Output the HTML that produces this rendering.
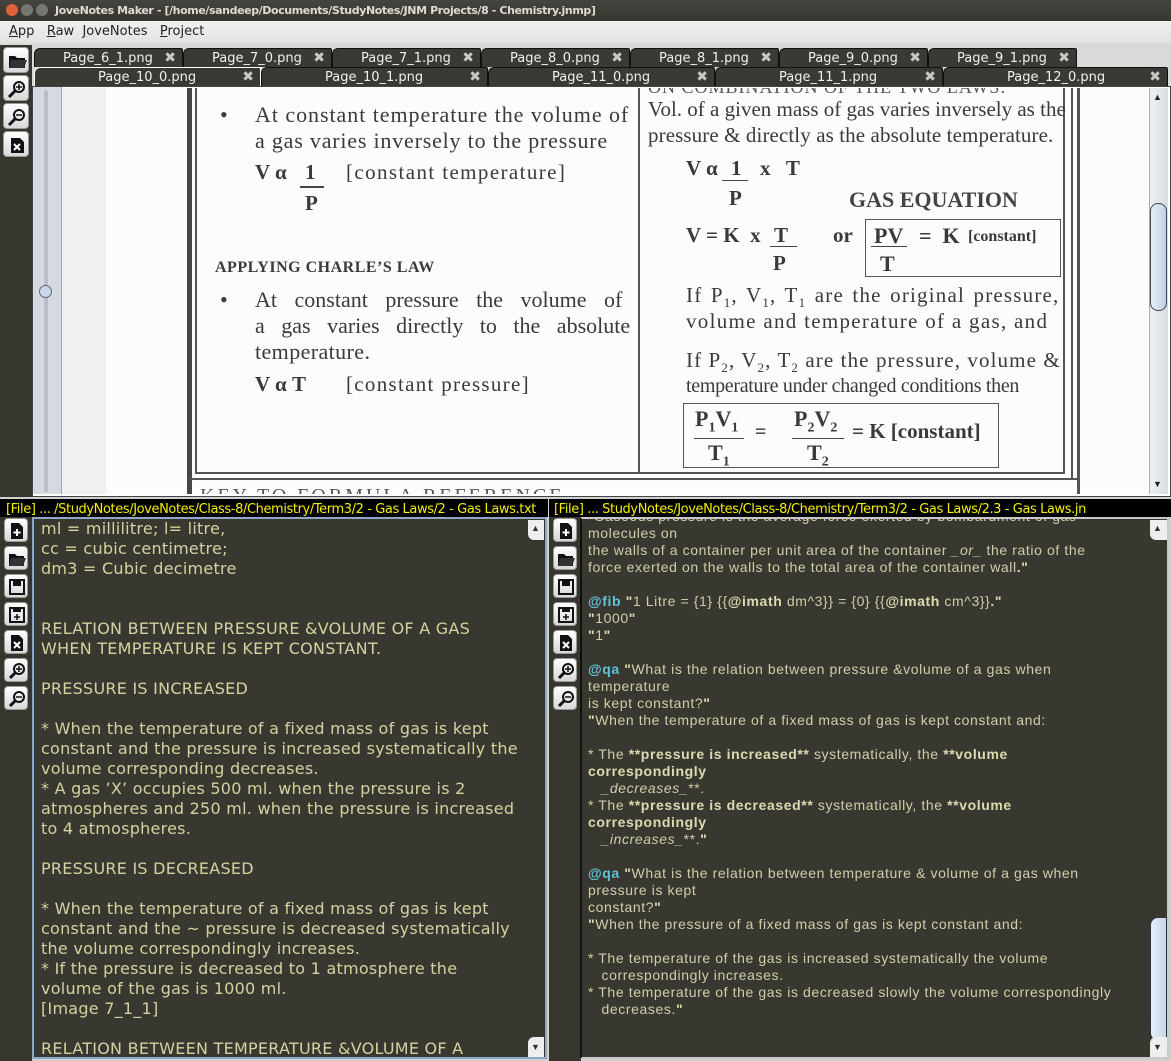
<!DOCTYPE html>
<html><head><meta charset="utf-8"><style>
*{margin:0;padding:0;box-sizing:border-box}
body{width:1171px;height:1061px;overflow:hidden;background:#d6d6d6;position:relative;font-family:"Liberation Sans",sans-serif}
.a{position:absolute}
.t{position:absolute;white-space:nowrap;line-height:1}
#title{left:0;top:0;width:1171px;height:21px;background:linear-gradient(#45443f,#36352f);color:#dfdbd2;font:bold 11px "DejaVu Sans",sans-serif}
#menu{left:0;top:21px;width:1171px;height:22px;background:linear-gradient(#f2f1f0,#e3e2e0);font:13px "DejaVu Sans",sans-serif;color:#222}
.tab{position:absolute;height:19px;background:#3a3933;border:1px solid #111;border-bottom:none;border-radius:6px 2px 0 0;color:#f0f0f0;font:13px "DejaVu Sans",sans-serif;}
.tab span{position:absolute;top:2px}
.tab b{position:absolute;right:6px;top:1px;color:#c8c8c8;font:bold 14px "DejaVu Sans",sans-serif}
.btn{position:absolute;width:26px;height:26px;border-radius:4px;background:linear-gradient(#ffffff,#d8d8d8);border:1px solid #999}
.btn svg{position:absolute;left:3px;top:3px}
.serif{font-family:"Liberation Serif",serif;color:#3a3a3a}
.ed1{position:absolute;left:41px;top:519px;font:16px "DejaVu Sans",sans-serif;color:#d4d2a0;line-height:20px;white-space:pre;letter-spacing:0.25px}
.ed2{position:absolute;left:588px;top:508px;font:14px "Liberation Sans",sans-serif;color:#d0ceaa;line-height:17px;white-space:pre;letter-spacing:0.6px}
.c{color:#5ec4d6;font-weight:bold}
.bd{font-weight:bold;color:#dcdab0}
.sb{position:absolute;background:linear-gradient(90deg,#eef0f3,#d8dce2);border-left:1px solid #aaa}
</style></head><body>
<div id="title" class="a">
 <div class="a" style="left:6px;top:4px;width:12px;height:12px;border-radius:6px;background:#e0613a"></div>
 <div class="a" style="left:21px;top:4px;width:12px;height:12px;border-radius:6px;background:#77766f"></div>
 <div class="a" style="left:36px;top:4px;width:12px;height:12px;border-radius:6px;background:#77766f"></div>
 <div class="t" style="left:55px;top:5px;letter-spacing:-0.4px">JoveNotes Maker - [/home/sandeep/Documents/StudyNotes/JNM Projects/8 - Chemistry.jnmp]</div>
</div>
<div id="menu" class="a">
 <div class="t" style="left:9px;top:4px"><u>A</u>pp&nbsp;&nbsp; <u>R</u>aw&nbsp; <u>J</u>oveNotes&nbsp;&nbsp; <u>P</u>roject</div>
</div>
<div class="a" style="left:0;top:43px;width:1171px;height:454px;background:#d9d9d9"></div>
<div class="a" style="left:0;top:45px;width:32px;height:452px;background:#36352e"></div>
<div class="btn" style="left:3px;top:47px"><svg width="20" height="20"><path d="M2 5h6l2 2h8v10H2z" fill="#111"/><path d="M4 9h16l-3 8H2z" fill="#333"/></svg></div>
<div class="btn" style="left:3px;top:75px"><svg width="20" height="20"><circle cx="12" cy="8" r="5" fill="none" stroke="#111" stroke-width="2"/><path d="M9 8h6M12 5v6" stroke="#111" stroke-width="1.5"/><path d="M8 12l-6 6" stroke="#111" stroke-width="3"/></svg></div>
<div class="btn" style="left:3px;top:103px"><svg width="20" height="20"><circle cx="12" cy="8" r="5" fill="none" stroke="#111" stroke-width="2"/><path d="M9 8h6" stroke="#111" stroke-width="1.5"/><path d="M8 12l-6 6" stroke="#111" stroke-width="3"/></svg></div>
<div class="btn" style="left:3px;top:131px"><svg width="20" height="20"><path d="M4 3h9l4 4v11H4z" fill="#111"/><path d="M7 9l6 6M13 9l-6 6" stroke="#fff" stroke-width="2"/></svg></div>

<div class="a" style="left:33px;top:47px;width:1138px;height:40px;background:#d9d9d9"></div>
<div class="tab" style="left:34px;top:48px;width:149px"><span style="left:28px">Page_6_1.png</span><b>✖</b></div>
<div class="tab" style="left:183px;top:48px;width:149px"><span style="left:28px">Page_7_0.png</span><b>✖</b></div>
<div class="tab" style="left:332px;top:48px;width:149px"><span style="left:28px">Page_7_1.png</span><b>✖</b></div>
<div class="tab" style="left:481px;top:48px;width:149px"><span style="left:28px">Page_8_0.png</span><b>✖</b></div>
<div class="tab" style="left:630px;top:48px;width:149px"><span style="left:28px">Page_8_1.png</span><b>✖</b></div>
<div class="tab" style="left:779px;top:48px;width:149px"><span style="left:28px">Page_9_0.png</span><b>✖</b></div>
<div class="tab" style="left:928px;top:48px;width:149px"><span style="left:28px">Page_9_1.png</span><b>✖</b></div>
<div class="tab" style="left:34px;top:67px;width:227px;border-color:#fff"><span style="left:63px">Page_10_0.png</span><b>✖</b></div>
<div class="tab" style="left:261px;top:67px;width:227px"><span style="left:63px">Page_10_1.png</span><b>✖</b></div>
<div class="tab" style="left:488px;top:67px;width:227px"><span style="left:63px">Page_11_0.png</span><b>✖</b></div>
<div class="tab" style="left:715px;top:67px;width:228px"><span style="left:63px">Page_11_1.png</span><b>✖</b></div>
<div class="tab" style="left:943px;top:67px;width:225px"><span style="left:63px">Page_12_0.png</span><b>✖</b></div>

<div class="a" style="left:32px;top:86px;width:1139px;height:411px;background:#fff;border:1px solid #444"></div>
<div class="a" style="left:33px;top:87px;width:29px;height:407px;background:#d5d9e0;border-right:1px solid #9aa"></div>
<div class="a" style="left:44px;top:90px;width:4px;height:402px;background:#b8bec8;border-radius:2px"></div>
<div class="a" style="left:39px;top:285px;width:13px;height:13px;border-radius:7px;background:#c7d8ea;border:1px solid #667"></div>
<div class="a" style="left:62px;top:88px;width:44px;height:406px;background:#eef0f2"></div>
<div class="a" style="left:106px;top:88px;width:1042px;height:406px;background:#fcfcfa;overflow:hidden">
 <div class="t serif" style="left:542px;top:-10px;font-size:18px;color:#555;letter-spacing:1px">ON COMBINATION OF THE TWO LAWS:</div>
 <div class="t serif" style="left:94px;top:398px;font-size:20px;color:#555;letter-spacing:3px">KEY TO FORMULA REFERENCE</div>
</div>
<div class="a" style="left:187px;top:88px;width:5px;height:406px;background:#4a4545"></div>
<div class="a" style="left:195px;top:88px;width:2px;height:386px;background:#555"></div>
<div class="a" style="left:195px;top:472px;width:870px;height:2px;background:#555"></div>
<div class="a" style="left:190px;top:478px;width:890px;height:2px;background:#555"></div>
<div class="a" style="left:638px;top:88px;width:2px;height:385px;background:#555"></div>
<div class="a" style="left:1063px;top:88px;width:2px;height:386px;background:#555"></div>
<div class="a" style="left:1071px;top:88px;width:2px;height:392px;background:#555"></div>
<div class="a" style="left:1077px;top:88px;width:3px;height:406px;background:#555"></div>

<div class="t serif" style="left:220px;top:104px;font-size:22px">•</div>
<div class="t serif" style="left:255px;top:104px;font-size:22px;letter-spacing:0.95px">At constant temperature the volume of</div>
<div class="t serif" style="left:255px;top:130px;font-size:22px;letter-spacing:0.8px">a gas varies inversely to the pressure</div>
<div class="t serif" style="left:255px;top:162px;font-size:21px;font-weight:bold">V α</div>
<div class="t serif" style="left:305px;top:162px;font-size:21px;font-weight:bold">1</div>
<div class="a" style="left:300px;top:186px;width:24px;height:2px;background:#444"></div>
<div class="t serif" style="left:305px;top:193px;font-size:21px;font-weight:bold">P</div>
<div class="t serif" style="left:346px;top:162px;font-size:21px;letter-spacing:1.4px">[constant temperature]</div>
<div class="t serif" style="left:215px;top:260px;font-size:16px;font-weight:bold;letter-spacing:0.5px">APPLYING CHARLE’S LAW</div>
<div class="t serif" style="left:220px;top:289px;font-size:22px">•</div>
<div class="t serif" style="left:255px;top:289px;font-size:22px;word-spacing:12px">At constant pressure the volume of</div>
<div class="t serif" style="left:255px;top:315px;font-size:22px;word-spacing:11px">a gas varies directly to the absolute</div>
<div class="t serif" style="left:255px;top:341px;font-size:22px;letter-spacing:0.4px">temperature.</div>
<div class="t serif" style="left:255px;top:374px;font-size:21px;font-weight:bold">V α T</div>
<div class="t serif" style="left:346px;top:374px;font-size:21px;letter-spacing:1.3px">[constant pressure]</div>

<div class="t serif" style="left:648px;top:99px;font-size:21px;letter-spacing:0px">Vol. of a given mass of gas varies inversely as the</div>
<div class="t serif" style="left:648px;top:125px;font-size:21px;letter-spacing:0.1px">pressure &amp; directly as the absolute temperature.</div>
<div class="t serif" style="left:686px;top:158px;font-size:21px;font-weight:bold">V α</div>
<div class="t serif" style="left:731px;top:158px;font-size:21px;font-weight:bold">1</div>
<div class="a" style="left:722px;top:180px;width:26px;height:1px;background:#444"></div>
<div class="t serif" style="left:760px;top:158px;font-size:21px;font-weight:bold">x&nbsp;&nbsp; T</div>
<div class="t serif" style="left:729px;top:188px;font-size:21px;font-weight:bold">P</div>
<div class="t serif" style="left:849px;top:189px;font-size:22px;font-weight:bold;color:#444">GAS EQUATION</div>
<div class="t serif" style="left:686px;top:225px;font-size:21px;font-weight:bold">V = K&nbsp; x</div>
<div class="t serif" style="left:774px;top:225px;font-size:21px;font-weight:bold">T</div>
<div class="a" style="left:770px;top:246px;width:27px;height:1px;background:#444"></div>
<div class="t serif" style="left:773px;top:253px;font-size:21px;font-weight:bold">P</div>
<div class="t serif" style="left:833px;top:225px;font-size:21px;font-weight:bold">or</div>
<div class="a" style="left:865px;top:219px;width:196px;height:58px;border:1px solid #555"></div>
<div class="t serif" style="left:874px;top:225px;font-size:22px;font-weight:bold">PV</div>
<div class="a" style="left:871px;top:246px;width:36px;height:1px;background:#444"></div>
<div class="t serif" style="left:880px;top:253px;font-size:22px;font-weight:bold">T</div>
<div class="t serif" style="left:919px;top:225px;font-size:22px;font-weight:bold">=&nbsp; K</div>
<div class="t serif" style="left:968px;top:229px;font-size:16px;font-weight:bold">[constant]</div>
<div class="t serif" style="left:686px;top:285px;font-size:21px;word-spacing:2px;letter-spacing:1.2px">If P<sub style="font-size:13px">1</sub>, V<sub style="font-size:13px">1</sub>, T<sub style="font-size:13px">1</sub> are the original pressure,</div>
<div class="t serif" style="left:686px;top:311px;font-size:21px;letter-spacing:1.3px">volume and temperature of a gas, and</div>
<div class="t serif" style="left:686px;top:350px;font-size:21px;letter-spacing:1.1px">If P<sub style="font-size:13px">2</sub>, V<sub style="font-size:13px">2</sub>, T<sub style="font-size:13px">2</sub> are the pressure, volume &amp;</div>
<div class="t serif" style="left:686px;top:376px;font-size:20px;letter-spacing:-0.3px">temperature under changed conditions then</div>
<div class="a" style="left:683px;top:403px;width:316px;height:65px;border:1px solid #555"></div>
<div class="t serif" style="left:695px;top:408px;font-size:22px;font-weight:bold">P<sub style="font-size:14px">1</sub>V<sub style="font-size:14px">1</sub></div>
<div class="a" style="left:694px;top:438px;width:50px;height:1px;background:#444"></div>
<div class="t serif" style="left:708px;top:442px;font-size:22px;font-weight:bold">T<sub style="font-size:14px">1</sub></div>
<div class="t serif" style="left:755px;top:422px;font-size:20px;font-weight:bold">=</div>
<div class="t serif" style="left:794px;top:408px;font-size:22px;font-weight:bold">P<sub style="font-size:14px">2</sub>V<sub style="font-size:14px">2</sub></div>
<div class="a" style="left:792px;top:438px;width:52px;height:1px;background:#444"></div>
<div class="t serif" style="left:807px;top:442px;font-size:22px;font-weight:bold">T<sub style="font-size:14px">2</sub></div>
<div class="t serif" style="left:852px;top:421px;font-size:21px;font-weight:bold">= K [constant]</div>

<div class="sb" style="left:1149px;top:88px;width:19px;height:406px"></div>
<div class="t" style="left:1153px;top:93px;font-size:9px;color:#222">▲</div>
<div class="t" style="left:1153px;top:480px;font-size:9px;color:#222">▼</div>
<div class="a" style="left:1150px;top:203px;width:17px;height:108px;border-radius:8px;background:linear-gradient(90deg,#e8f0f8,#bcd0e4);border:1px solid #445"></div>

<div class="a" style="left:0;top:497px;width:1171px;height:564px;background:#d0d0d0"></div>
<div class="a" style="left:0;top:499px;width:548px;height:18px;background:#000"></div>
<div class="t" style="left:6px;top:502px;font:13px 'DejaVu Sans',sans-serif;color:#f4f000;letter-spacing:-0.4px">[File] ... /StudyNotes/JoveNotes/Class-8/Chemistry/Term3/2 - Gas Laws/2 - Gas Laws.txt</div>
<div class="a" style="left:549px;top:499px;width:622px;height:18px;background:#000"></div>
<div class="t" style="left:554px;top:502px;font:13px 'DejaVu Sans',sans-serif;color:#f4f000;letter-spacing:-0.4px">[File] ... StudyNotes/JoveNotes/Class-8/Chemistry/Term3/2 - Gas Laws/2.3 - Gas Laws.jn</div>

<div class="a" style="left:0;top:517px;width:32px;height:544px;background:#36352e"></div>
<div class="a" style="left:32px;top:517px;width:515px;height:542px;background:#393830;border:2px solid #8fa8c8"></div>
<div class="a" style="left:549px;top:517px;width:32px;height:544px;background:#36352e"></div>
<div class="a" style="left:580px;top:517px;width:589px;height:542px;background:#393830;border:2px solid #c8c8c8;border-left-color:#111"></div>

<div class="btn" style="left:4px;top:518px;width:24px;height:24px"><svg width="18" height="18"><path d="M3 1h8l4 4v12H3z" fill="#111"/><path d="M9 7v7M5.5 10.5h7" stroke="#fff" stroke-width="2"/></svg></div>
<div class="btn" style="left:4px;top:546px;width:24px;height:24px"><svg width="18" height="18"><path d="M1 4h6l2 2h7v10H1z" fill="#111"/><path d="M3 8h15l-3 8H1z" fill="#333"/></svg></div>
<div class="btn" style="left:4px;top:574px;width:24px;height:24px"><svg width="18" height="18"><rect x="2" y="2" width="14" height="14" fill="none" stroke="#111" stroke-width="2"/><rect x="5" y="2" width="8" height="6" fill="#111"/></svg></div>
<div class="btn" style="left:4px;top:602px;width:24px;height:24px"><svg width="18" height="18"><rect x="2" y="2" width="14" height="14" fill="none" stroke="#111" stroke-width="2"/><rect x="5" y="2" width="8" height="4" fill="#111"/><path d="M9 8v6M6 11h6" stroke="#111" stroke-width="1.5"/></svg></div>
<div class="btn" style="left:4px;top:630px;width:24px;height:24px"><svg width="18" height="18"><path d="M3 1h8l4 4v12H3z" fill="#111"/><path d="M6 8l6 6M12 8l-6 6" stroke="#fff" stroke-width="2"/></svg></div>
<div class="btn" style="left:4px;top:658px;width:24px;height:24px"><svg width="18" height="18"><circle cx="11" cy="7" r="5" fill="none" stroke="#111" stroke-width="2"/><path d="M8 7h6M11 4v6" stroke="#111" stroke-width="1.5"/><path d="M7 11l-5 5" stroke="#111" stroke-width="3"/></svg></div>
<div class="btn" style="left:4px;top:686px;width:24px;height:24px"><svg width="18" height="18"><circle cx="11" cy="7" r="5" fill="none" stroke="#111" stroke-width="2"/><path d="M8 7h6" stroke="#111" stroke-width="1.5"/><path d="M7 11l-5 5" stroke="#111" stroke-width="3"/></svg></div>

<div class="btn" style="left:553px;top:518px;width:24px;height:24px"><svg width="18" height="18"><path d="M3 1h8l4 4v12H3z" fill="#111"/><path d="M9 7v7M5.5 10.5h7" stroke="#fff" stroke-width="2"/></svg></div>
<div class="btn" style="left:553px;top:546px;width:24px;height:24px"><svg width="18" height="18"><path d="M1 4h6l2 2h7v10H1z" fill="#111"/><path d="M3 8h15l-3 8H1z" fill="#333"/></svg></div>
<div class="btn" style="left:553px;top:574px;width:24px;height:24px"><svg width="18" height="18"><rect x="2" y="2" width="14" height="14" fill="none" stroke="#111" stroke-width="2"/><rect x="5" y="2" width="8" height="6" fill="#111"/></svg></div>
<div class="btn" style="left:553px;top:602px;width:24px;height:24px"><svg width="18" height="18"><rect x="2" y="2" width="14" height="14" fill="none" stroke="#111" stroke-width="2"/><rect x="5" y="2" width="8" height="4" fill="#111"/><path d="M9 8v6M6 11h6" stroke="#111" stroke-width="1.5"/></svg></div>
<div class="btn" style="left:553px;top:630px;width:24px;height:24px"><svg width="18" height="18"><path d="M3 1h8l4 4v12H3z" fill="#111"/><path d="M6 8l6 6M12 8l-6 6" stroke="#fff" stroke-width="2"/></svg></div>
<div class="btn" style="left:553px;top:658px;width:24px;height:24px"><svg width="18" height="18"><circle cx="11" cy="7" r="5" fill="none" stroke="#111" stroke-width="2"/><path d="M8 7h6M11 4v6" stroke="#111" stroke-width="1.5"/><path d="M7 11l-5 5" stroke="#111" stroke-width="3"/></svg></div>
<div class="btn" style="left:553px;top:686px;width:24px;height:24px"><svg width="18" height="18"><circle cx="11" cy="7" r="5" fill="none" stroke="#111" stroke-width="2"/><path d="M8 7h6" stroke="#111" stroke-width="1.5"/><path d="M7 11l-5 5" stroke="#111" stroke-width="3"/></svg></div>

<div class="ed1">ml = millilitre; l= litre,
cc = cubic centimetre;
dm3 = Cubic decimetre


RELATION BETWEEN PRESSURE &amp;VOLUME OF A GAS
WHEN TEMPERATURE IS KEPT CONSTANT.

PRESSURE IS INCREASED

* When the temperature of a fixed mass of gas is kept
constant and the pressure is increased systematically the
volume corresponding decreases.
* A gas ’X’ occupies 500 ml. when the pressure is 2
atmospheres and 250 ml. when the pressure is increased
to 4 atmospheres.

PRESSURE IS DECREASED

* When the temperature of a fixed mass of gas is kept
constant and the ~ pressure is decreased systematically
the volume correspondingly increases.
* If the pressure is decreased to 1 atmosphere the
volume of the gas is 1000 ml.
[Image 7_1_1]

RELATION BETWEEN TEMPERATURE &amp;VOLUME OF A</div>
<div class="a" style="left:528px;top:520px;width:16px;height:537px;background:#393830"></div>
<div class="a" style="left:528px;top:520px;width:16px;height:20px;background:#eee;border-radius:0 0 0 6px"></div>
<div class="t" style="left:531px;top:524px;font-size:9px;color:#333">▲</div>
<div class="a" style="left:528px;top:1037px;width:16px;height:20px;background:#eee;border-radius:6px 0 0 0"></div>
<div class="t" style="left:531px;top:1043px;font-size:9px;color:#333">▼</div>

<div class="a" style="left:582px;top:519px;width:568px;height:538px;overflow:hidden"><div class="ed2" style="left:6px;top:-11px">"Gaseous pressure is the average force exerted by bombardment of gas
molecules on
the walls of a container per unit area of the container <i>_or_</i> the ratio of the
force exerted on the walls to the total area of the container wall<span class="bd">."</span>

<span class="c">@fib</span> <span class="bd">"</span>1 Litre = {1} {{<b class="bd">@imath</b> dm^3}} = {0} {{<b class="bd">@imath</b> cm^3}}<span class="bd">."</span>
<span class="bd">"</span>1000<span class="bd">"</span>
<span class="bd">"</span>1<span class="bd">"</span>

<span class="c">@qa</span> <span class="bd">"</span>What is the relation between pressure &amp;volume of a gas when
temperature
is kept constant?<span class="bd">"</span>
<span class="bd">"</span>When the temperature of a fixed mass of gas is kept constant and:

* The <b class="bd">**pressure is increased**</b> systematically, the <b class="bd">**volume
correspondingly</b>
   <i>_decreases_</i>**.
* The <b class="bd">**pressure is decreased**</b> systematically, the <b class="bd">**volume
correspondingly</b>
   <i>_increases_</i>**.<span class="bd">"</span>

<span class="c">@qa</span> <span class="bd">"</span>What is the relation between temperature &amp; volume of a gas when
pressure is kept
constant?<span class="bd">"</span>
<span class="bd">"</span>When the pressure of a fixed mass of gas is kept constant and:

* The temperature of the gas is increased systematically the volume
   correspondingly increases.
* The temperature of the gas is decreased slowly the volume correspondingly
   decreases.<span class="bd">"</span></div></div>
<div class="a" style="left:1150px;top:520px;width:17px;height:20px;background:#eee;border-radius:0 0 0 6px"></div>
<div class="t" style="left:1153px;top:524px;font-size:9px;color:#333">▲</div>
<div class="a" style="left:1150px;top:917px;width:17px;height:124px;border-radius:8px 0 0 8px;background:linear-gradient(90deg,#e8f0f8,#c4d6e8);border:1px solid #334"></div>
<div class="a" style="left:1150px;top:1037px;width:17px;height:20px;background:#eee;border-radius:6px 0 0 0"></div>
<div class="t" style="left:1153px;top:1043px;font-size:9px;color:#333">▼</div>
</body></html>
